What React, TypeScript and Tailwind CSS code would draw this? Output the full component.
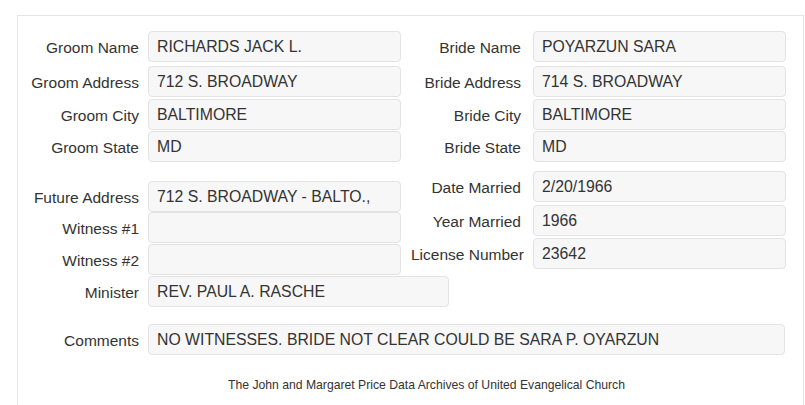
import React from "react";

type Field = { label: string; value: string; gap: string };

const groom: Field[] = [
  { label: "Groom Name", value: "RICHARDS JACK L.", gap: "mt-0" },
  { label: "Groom Address", value: "712 S. BROADWAY", gap: "mt-[4px]" },
  { label: "Groom City", value: "BALTIMORE", gap: "mt-[2px]" },
  { label: "Groom State", value: "MD", gap: "mt-[1px]" },
];

const bride: Field[] = [
  { label: "Bride Name", value: "POYARZUN SARA", gap: "mt-0" },
  { label: "Bride Address", value: "714 S. BROADWAY", gap: "mt-[4px]" },
  { label: "Bride City", value: "BALTIMORE", gap: "mt-[2px]" },
  { label: "Bride State", value: "MD", gap: "mt-[1px]" },
];

const extraLeft: Field[] = [
  { label: "Future Address", value: "712 S. BROADWAY - BALTO.,", gap: "mt-0" },
  { label: "Witness #1", value: "", gap: "mt-0" },
  { label: "Witness #2", value: "", gap: "mt-[1px]" },
];

const extraRight: Field[] = [
  { label: "Date Married", value: "2/20/1966", gap: "mt-0" },
  { label: "Year Married", value: "1966", gap: "mt-[3px]" },
  { label: "License Number", value: "23642", gap: "mt-[2px]" },
];

function Box({ value, width }: { value: string; width: string }) {
  return (
    <div
      className={`${width} h-[31px] shrink-0 rounded-[4px] border border-[#e3e3e3] bg-[#f7f7f7] pl-[8px] pt-[5px] text-[15.8px] text-[#333] whitespace-nowrap overflow-hidden`}
    >
      {value}
    </div>
  );
}

function Row({ f, side }: { f: Field; side: "left" | "right" }) {
  return (
    <div className={`flex items-center ${f.gap}`}>
      <div className="w-[110px] shrink-0 text-right whitespace-nowrap pt-[3px]">
        {f.label}
      </div>
      <div className={side === "left" ? "ml-[9px]" : "ml-[12px]"}>
        <Box value={f.value} width="w-[253px]" />
      </div>
    </div>
  );
}

export default function App() {
  return (
    <div
      className="w-[805px] h-[405px] overflow-hidden bg-white text-[#333] text-[15.5px] leading-[20px]"
      style={{ fontFamily: '"Liberation Sans", Arial, sans-serif' }}
    >
      <div className="ml-[17px] mt-[15px] w-[787px] border border-[#e5e5e5] pt-[15px] pb-[40px]">
        {/* groom / bride */}
        <div className="flex">
          <div className="w-[393px] pl-[11px]">
            {groom.map((f) => (
              <Row key={f.label} f={f} side="left" />
            ))}
          </div>
          <div>
            {bride.map((f) => (
              <Row key={f.label} f={f} side="right" />
            ))}
          </div>
        </div>

        {/* future address / marriage */}
        <div className="flex mt-[9px]">
          <div className="w-[393px] pl-[11px] pt-[10px]">
            {extraLeft.map((f) => (
              <Row key={f.label} f={f} side="left" />
            ))}
          </div>
          <div>
            {extraRight.map((f) => (
              <Row key={f.label} f={f} side="right" />
            ))}
          </div>
        </div>

        {/* minister */}
        <div className="flex items-center mt-[1px] pl-[11px]">
          <div className="w-[110px] shrink-0 text-right pt-[3px]">Minister</div>
          <div className="ml-[9px]">
            <Box value="REV. PAUL A. RASCHE" width="w-[301px]" />
          </div>
        </div>

        {/* comments */}
        <div className="flex items-center mt-[17px] pl-[11px]">
          <div className="w-[110px] shrink-0 text-right pt-[3px]">Comments</div>
          <div className="ml-[9px]">
            <Box
              value="NO WITNESSES. BRIDE NOT CLEAR COULD BE SARA P. OYARZUN"
              width="w-[637px]"
            />
          </div>
        </div>

        <div className="mt-[22px] pl-[32px] text-center text-[12.2px] leading-[17px]">
          The John and Margaret Price Data Archives of United Evangelical Church
        </div>
      </div>
    </div>
  );
}
